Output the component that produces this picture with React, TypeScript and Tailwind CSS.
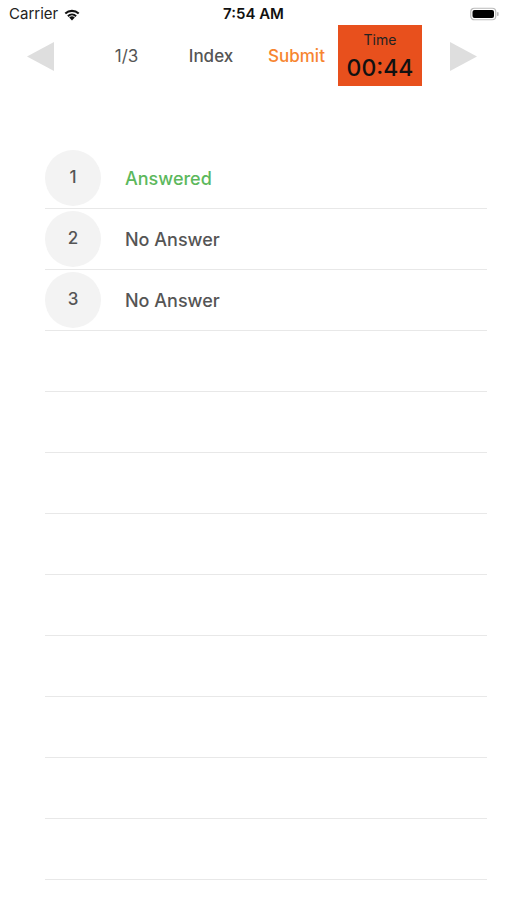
import React from "react";

const rows = [
  { n: 1, label: "Answered", answered: true },
  { n: 2, label: "No Answer", answered: false },
  { n: 3, label: "No Answer", answered: false },
];

export default function App() {
  const empty = Array.from({ length: 9 });
  return (
    <div
      className="w-[507px] h-[900px] bg-white overflow-hidden"
      style={{ fontFamily: "Inter, 'Liberation Sans', Arial, sans-serif" }}
    >
      {/* Status bar */}
      <div className="relative h-[25px] flex items-center justify-between pl-[9px] pr-[7px] pt-[3px]">
        <div className="flex items-center gap-[5px]">
          <span className="text-[15px] text-[#222]">Carrier</span>
          <svg width="18" height="13" viewBox="0 0 18 13">
            <path d="M9 12.5 L6.2 9.4 A4.2 4.2 0 0 1 11.8 9.4 Z" fill="#111" />
            <path d="M4.2 7.4 A7 7 0 0 1 13.8 7.4 L12.4 8.9 A5 5 0 0 0 5.6 8.9 Z" fill="#111" />
            <path d="M1.6 4.8 A10.7 10.7 0 0 1 16.4 4.8 L15 6.3 A8.7 8.7 0 0 0 3 6.3 Z" fill="#111" />
          </svg>
        </div>
        <span className="absolute left-1/2 top-[3px] bottom-0 flex items-center -translate-x-1/2 text-[15px] font-semibold text-[#111]">7:54 AM</span>
        <svg width="30" height="14" viewBox="0 0 30 14">
          <rect x="0.75" y="1.25" width="25" height="11.5" rx="3.5" fill="none" stroke="#bbb" strokeWidth="1.2" />
          <rect x="2.5" y="3" width="21.5" height="8" rx="2" fill="#000" />
          <rect x="27" y="5" width="1.6" height="4" rx="0.8" fill="#bbb" />
        </svg>
      </div>

      {/* Nav bar */}
      <div className="flex items-center h-[61px]">
        <div className="w-[82px] flex items-center justify-center pr-[1px] pt-[1px]">
          <svg width="28" height="31" viewBox="0 0 28 31">
            <path d="M0 15.5 L27 1 L27 30 Z" fill="#dedede" />
          </svg>
        </div>
        <div className="w-[76px] text-center text-[17px] text-[#555] pl-[13px] pt-[3px]">1/3</div>
        <div className="w-[103px] text-center text-[17px] font-medium text-[#555] pl-[3px] pt-[3px]">Index</div>
        <div className="w-[77px] text-center text-[17px] font-medium text-[#f7852f] pr-[6px] pt-[3px]">Submit</div>
        <div className="w-[84px] h-[61px] bg-[#e8501d] flex flex-col items-center justify-center">
          <span className="text-[14px] text-[#222] leading-none mt-[1px]">Time</span>
          <span className="text-[23px] font-medium text-[#111] leading-none mt-[10px]">00:44</span>
        </div>
        <div className="flex-1 flex items-center justify-center pr-[4px] pt-[1px]">
          <svg width="28" height="31" viewBox="0 0 28 31">
            <path d="M28 15.5 L1 1 L1 30 Z" fill="#dedede" />
          </svg>
        </div>
      </div>

      {/* List */}
      <div className="ml-[45px] mr-[20px] mt-[62px]">
        {rows.map((r) => (
          <div key={r.n} className="h-[61px] border-b border-[#e8e8e8] flex items-center">
            <div className="w-[56px] h-[56px] rounded-full bg-[#f3f3f3] flex items-center justify-center text-[17px] font-medium text-[#555]">
              {r.n}
            </div>
            <span
              className={
                "ml-[24px] text-[18px] font-medium " +
                (r.answered ? "text-[#5cb85c]" : "text-[#555]")
              }
            >
              {r.label}
            </span>
          </div>
        ))}
        {empty.map((_, i) => (
          <div key={i} className="h-[61px] border-b border-[#e8e8e8]" />
        ))}
      </div>
    </div>
  );
}
